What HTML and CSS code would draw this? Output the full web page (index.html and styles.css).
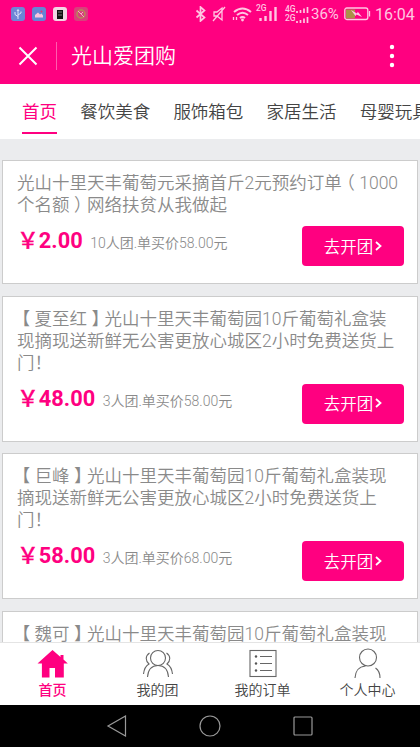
FILE: index.html
```html
<!DOCTYPE html>
<html lang="zh-CN">
<head>
<meta charset="utf-8">
<meta name="viewport" content="width=device-width, initial-scale=1">
<title>光山爱团购</title>
<link rel="stylesheet" href="styles.css">
</head>
<body>
<div class="phone">
  <header class="top">
    <div class="status">
      <div class="notices">
        <svg width="14" height="14" viewBox="0 0 14 14"><rect width="14" height="14" rx="3" fill="#6f86d6"/><path d="M7 12V3M7 9.500 4 7.500V5M7 8l3-2V4.500M6 4l1-1.500L8 4" fill="none" stroke="#dfe6fa"/></svg>
        <svg width="14" height="14" viewBox="0 0 14 14"><rect width="14" height="14" rx="3" fill="#6685d4"/><path d="M3 10.500V8l3-2.500 2 2 1.500-1 1.500 2v2z" fill="#fbc4df"/><circle cx="9.500" cy="4.500" r="1" fill="#e9346f"/></svg>
        <svg width="14" height="14" viewBox="0 0 14 14"><rect width="14" height="14" rx="3" fill="#f3d5e5"/><path d="M4 3h6v9H4z" fill="#111"/><path d="M5 5h4M5 8h4" stroke="#777"/></svg>
        <svg width="14" height="14" viewBox="0 0 14 14"><rect width="14" height="14" rx="3" fill="#d8407c"/><circle cx="7" cy="7" r="4" fill="none" stroke="#b58c56" stroke-width="1.500"/><path d="m4 4 6 6M7 7l2-2" stroke="#f5a9c4"/></svg>
      </div>
      <svg class="bluetooth" width="11" height="16" viewBox="0 0 11 16"><path d="m1.500 4.500 8 7-4 3.500V1l4 3.500-8 7" class="sline wide"/></svg>
      <svg class="mute" width="14" height="16" viewBox="0 0 14 16"><path d="M2 6h3l5-4v12l-5-4H2zM13 1 1 15" class="sline"/></svg>
      <svg class="wifi" width="21" height="16" viewBox="0 0 21 16"><path d="M2 6q8.500-7 17 0M5 9q5.500-4.500 11 0M8 12q2.500-2 5 0" class="sline arcs"/><circle cx="10.500" cy="14" r="1.400" class="sfill"/><path d="M1.500 14v-3M4.500 11v3" class="sline"/></svg>
      <div class="signal"><span>2G</span>
        <svg width="18" height="16" viewBox="0 0 18 16"><path d="M1.500 15v-3M6.500 15v-5M11.500 15V5M16.500 15V1" class="sline bars"/></svg>
      </div>
      <div class="dual">
        <div class="dual-row"><span>4G</span><svg width="13" height="7" viewBox="0 0 13 7"><path d="M1 6V4M4.500 6V3M8 6V1.500M11.500 6V0" class="sline wide"/></svg></div>
        <div class="dual-row"><span>2G</span><svg width="13" height="7" viewBox="0 0 13 7"><path d="M1 7V5M4.500 7V4M8 7V2.500M11.500 7V1" class="sline wide"/></svg></div>
      </div>
      <span class="percent">36%</span>
      <svg class="battery" width="27" height="14" viewBox="0 0 27 14"><rect x=".8" y="1" width="23" height="11.500" rx="2" class="sline"/><path d="M2 2.500h9v9H2z" fill="#ab9148"/><path d="M25.500 4v5.500" class="sline"/><path d="m7 3 6 3.500.8-1.700L18 10l-5.500-2.500-1 1.500z" class="sfill"/></svg>
      <span class="clock">16:04</span>
    </div>
    <div class="titlebar">
      <svg class="close" width="20" height="20" viewBox="0 0 20 20"><path d="m1.500 1.500 17 17m0-17-17 17" fill="none" stroke="#fff" stroke-width="2"/></svg>
      <span class="divider"></span>
      <h1>光山爱团购</h1>
      <svg class="more" width="6" height="24" viewBox="0 0 6 24"><g fill="#fff"><circle cx="3" cy="3" r="2.200"/><circle cx="3" cy="12" r="2.200"/><circle cx="3" cy="21" r="2.200"/></g></svg>
    </div>
  </header>

  <nav class="tabs">
    <span class="tab active">首页</span>
    <span class="tab">餐饮美食</span>
    <span class="tab">服饰箱包</span>
    <span class="tab">家居生活</span>
    <span class="tab">母婴玩具</span>
  </nav>

  <main class="list">
    <article class="card">
      <h2>光山十里天丰葡萄元采摘首斤2元预约订单<span class="bracket">（</span>1000<br>个名额<span class="bracket">）</span>网络扶贫从我做起</h2>
      <div class="buy">
        <span class="price"><span class="yen">￥</span>2.00</span><span class="note">10人团.单买价58.00元</span>
        <span class="go">去开团<svg width="7" height="10" viewBox="0 0 7 10"><path d="m1 1 4.500 4L1 9"/></svg></span>
      </div>
    </article>
    <article class="card">
      <h2><span class="bracket">【</span>夏至红<span class="bracket">】</span>光山十里天丰葡萄园10斤葡萄礼盒装<br>现摘现送新鲜无公害更放心城区2小时免费送货上<br>门！</h2>
      <div class="buy">
        <span class="price"><span class="yen">￥</span>48.00</span><span class="note">3人团.单买价58.00元</span>
        <span class="go">去开团<svg width="7" height="10" viewBox="0 0 7 10"><path d="m1 1 4.500 4L1 9"/></svg></span>
      </div>
    </article>
    <article class="card">
      <h2><span class="bracket">【</span>巨峰<span class="bracket">】</span>光山十里天丰葡萄园10斤葡萄礼盒装现<br>摘现送新鲜无公害更放心城区2小时免费送货上<br>门！</h2>
      <div class="buy">
        <span class="price"><span class="yen">￥</span>58.00</span><span class="note">3人团.单买价68.00元</span>
        <span class="go">去开团<svg width="7" height="10" viewBox="0 0 7 10"><path d="m1 1 4.500 4L1 9"/></svg></span>
      </div>
    </article>
    <article class="card">
      <h2><span class="bracket">【</span>魏可<span class="bracket">】</span>光山十里天丰葡萄园10斤葡萄礼盒装现</h2>
    </article>
  </main>

  <nav class="bottom">
    <div class="item active">
      <svg width="32" height="32" viewBox="0 0 32 32"><path d="M15.500 3 .5 16.500h4.400V30.500H12.500V21h5.500v9.500h8.800v-14h4L26.500 12.500V8h-3v2z" fill="#ff0080"/></svg>
      <span>首页</span>
    </div>
    <div class="item">
      <svg width="32" height="32" viewBox="0 0 32 32"><g class="line"><circle cx="16" cy="11" r="7.500"/><path d="M5.500 30C6 24 9 18.500 16 18.500S26 24 26.500 30M7.500 6C3 9 3.500 14 7 17c-3.500 2-5 5.500-5.500 10M24.500 6c4.500 3 4 8 .5 11 3.500 2 5 5.500 5.500 10"/></g></svg>
      <span>我的团</span>
    </div>
    <div class="item">
      <svg width="32" height="32" viewBox="0 0 32 32"><g class="line"><rect x="3" y="3.500" width="26" height="26"/><path d="M13 9.500h12M13 16.500h12M13 23.500h12"/></g><g fill="#555"><circle cx="9" cy="9.500" r="1.200"/><circle cx="9" cy="16.500" r="1.200"/><circle cx="9" cy="23.500" r="1.200"/></g></svg>
      <span>我的订单</span>
    </div>
    <div class="item">
      <svg width="32" height="32" viewBox="0 0 32 32"><g class="line"><circle cx="16" cy="10.500" r="8.500"/><path d="M3 31c.3-6 3.500-11.500 10.500-12M23.500 21c3 2 4.500 5.500 4.500 10"/></g></svg>
      <span>个人中心</span>
    </div>
  </nav>

  <footer class="system">
    <svg width="22" height="22" viewBox="0 0 22 22"><path d="M19.500 1v20L2 11z"/></svg>
    <svg width="22" height="22" viewBox="0 0 22 22"><circle cx="11" cy="11" r="10"/></svg>
    <svg width="22" height="22" viewBox="0 0 22 22"><rect x="2" y="2" width="18" height="18" rx="1"/></svg>
  </footer>
</div>
</body>
</html>
```

FILE: styles.css
```css
* { box-sizing: border-box; }
body {
  margin: 0;
  font-family: Roboto, "Noto Sans CJK SC", sans-serif;
  font-weight: 350;
}
svg { display: block; flex: none; }
h1, h2 { margin: 0; font-weight: 350; }

.phone {
  width: 420px;
  height: 747px;
  display: flex;
  flex-direction: column;
  overflow: hidden;
  white-space: nowrap;
  background: #ebecee;
}

.top {
  flex: none;
  height: 84px;
  background: #ff0080;
  color: #fff;
}
.status {
  height: 28px;
  display: flex;
  align-items: center;
  color: #ffc6e2;
}
.notices { display: flex; gap: 7px; margin-left: 11px; }
.sline { fill: none; stroke: #ffc6e2; stroke-width: 1.3; }
.sline.wide { stroke-width: 1.7; }
.sline.arcs { stroke-width: 2; }
.sline.bars { stroke-width: 2.4; }
.sfill { fill: #ffc6e2; }
.bluetooth { margin-left: 107px; }
.mute { margin-left: 6px; }
.wifi { margin-left: 6px; }
.signal {
  display: flex;
  margin-left: 3px;
  width: 21px;
  height: 16px;
  position: relative;
  justify-content: flex-end;
}
.signal span {
  position: absolute;
  left: 0;
  top: -2px;
  font: 500 8.500px/8px Roboto, sans-serif;
}
.dual { margin-left: 8px; width: 25px; }
.dual-row {
  display: flex;
  align-items: flex-end;
  height: 9px;
  font: 500 8.500px/9px Roboto, sans-serif;
}
.percent { margin-left: 1px; width: 30px; font-size: 15px; font-weight: 400; }
.battery { margin-left: 3px; }
.clock { margin-left: 4px; font-size: 16px; font-weight: 400; }

.titlebar {
  height: 56px;
  display: flex;
  align-items: center;
  padding: 0 25px 0 18px;
}
.divider { width: 1px; height: 28px; margin: 0 14px 0 18px; background: #ff5cae; }
.titlebar h1 { font-size: 21px; line-height: 28px; font-weight: 350; }
.more { margin-left: auto; }

.tabs {
  flex: none;
  height: 55px;
  display: flex;
  gap: 23.200px;
  padding-left: 22px;
  background: #fff;
  color: #444;
  font-size: 17.500px;
  overflow: hidden;
}
.tab { flex: none; height: 50px; line-height: 56px; }
.tab.active { color: #ff0080; border-bottom: 2px solid #ff0080; font-weight: 400; }

.list {
  flex: 1;
  min-height: 0;
  display: flex;
  flex-direction: column;
  gap: 11.600px;
  padding: 21px 2px 0;
  overflow: hidden;
}
.card {
  flex: none;
  padding: 11px 13px 16px 14px;
  background: #fff;
  border: 1px solid #ccc;
}
.card h2 { font-size: 17.500px; line-height: 22px; color: #8a8a8a; }
/* Half-width bracket glyphs, centred in a full-width cell */
.bracket { font-feature-settings: "halt"; padding: 0 .25em; }
.buy { display: flex; align-items: flex-start; margin-top: 10px; height: 41px; }
.price { font-size: 21.800px; line-height: 30px; font-weight: 700; color: #ff0080; }
.yen { font-weight: 500; -webkit-text-stroke: .3px #ff0080; }
.note { margin-left: 7.500px; font-size: 14px; line-height: 35px; color: #8a8a8a; }
.go {
  display: flex;
  align-items: center;
  justify-content: center;
  gap: 2px;
  width: 102px;
  height: 40px;
  margin-left: auto;
  padding-bottom: 1px;
  border-radius: 4px;
  background: #ff0080;
  color: #fff;
  font-size: 16.500px;
}
.go path { fill: none; stroke: #fff; stroke-width: 1.8; }

.bottom {
  flex: none;
  height: 63px;
  display: grid;
  grid-template-columns: repeat(4, 1fr);
  background: #fff;
  border-top: 1px solid #e4e4e4;
}
.item {
  display: flex;
  flex-direction: column;
  align-items: center;
  padding-top: 4px;
  color: #444;
  font-size: 14px;
  line-height: 22px;
}
.item.active { color: #ff0080; font-weight: 500; }
.line { fill: none; stroke: #666; stroke-width: 1.1; }

.system {
  flex: none;
  height: 42px;
  display: flex;
  align-items: center;
  justify-content: center;
  gap: 71px;
  background: #000;
}
.system svg { fill: none; stroke: #999; stroke-width: 1.2; }
```
